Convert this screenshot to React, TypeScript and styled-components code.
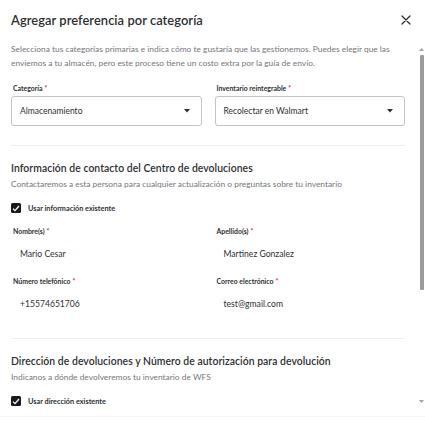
import React from "react";
import styled, { createGlobalStyle } from "styled-components";

const GlobalStyle = createGlobalStyle`
  html, body { margin: 0; padding: 0; background: #fff; }
  body { font-family: Lato, "Noto Sans", sans-serif; color: #2e2f32; }
  * { box-sizing: border-box; }
`;

const Modal = styled.div`
  width: 425px;
  height: 421px;
  background: #fff;
  display: flex;
  flex-direction: column;
  overflow: hidden;
`;

const Header = styled.header`
  height: 42px;
  flex: none;
  display: flex;
  align-items: center;
  justify-content: space-between;
  padding: 0 14px 2px 11px;
`;

const Title = styled.h1`
  margin: 0;
  font-size: 12.9px;
  font-weight: 600;
  letter-spacing: 0.05px;
  color: #2e2f32;
`;

const CloseButton = styled.button`
  border: 0;
  background: none;
  padding: 0;
  width: 11px;
  height: 11px;
  display: flex;
  align-items: center;
  justify-content: center;
  cursor: pointer;
`;

const Body = styled.div`
  position: relative;
  flex: 1;
  overflow: hidden;
`;

const Content = styled.div`
  padding: 0 20px 0 11px;
`;

const ScrollTrack = styled.div`
  position: absolute;
  top: 3px;
  right: 0;
  bottom: 10px;
  width: 7px;
  display: flex;
  flex-direction: column;
  align-items: center;
  background: #fff;
`;

const ScrollArrow = styled.div`
  height: 9px;
  flex: none;
  display: flex;
  align-items: center;
  justify-content: center;
`;

const ScrollGutter = styled.div`
  flex: 1;
  width: 100%;
  display: flex;
  justify-content: center;
`;

const ScrollThumb = styled.div`
  width: 4px;
  margin-top: 1px;
  background: #9b9b9b;
  border-radius: 1px;
`;

const Footer = styled.div`
  height: 5px;
  flex: none;
  border-top: 1px solid #f7f7f7;
`;

const Description = styled.p`
  margin: 0;
  font-size: 8.4px;
  line-height: 14px;
  color: #74767c;
`;

const Grid = styled.div<{ $top: number }>`
  display: grid;
  grid-template-columns: 1fr 1fr;
  column-gap: 13px;
  row-gap: 8px;
  margin-top: ${(p) => p.$top}px;
`;

const Field = styled.div`
  display: flex;
  flex-direction: column;
  gap: 4px;
`;

const Label = styled.label`
  font-size: 6.9px;
  line-height: 8px;
  font-weight: 700;
  color: #2e2f32;
  padding-left: 2px;
`;

const Req = styled.span`
  color: #de1c24;
  margin-left: 2px;
`;

const Select = styled.div`
  height: 30px;
  border: 1px solid #c4c4c4;
  border-radius: 3px;
  display: flex;
  align-items: center;
  justify-content: space-between;
  padding: 0 11px 0 8px;
  font-size: 8.5px;
  color: #2e2f32;
`;

const Value = styled.div`
  height: 30px;
  display: flex;
  align-items: center;
  padding-left: 9px;
  font-size: 8.6px;
  color: #2e2f32;
`;

const Divider = styled.hr`
  margin: 19px 0 0;
  border: 0;
  border-top: 1px solid #ececec;
`;

const SectionTitle = styled.h2`
  margin: 15px 0 0;
  font-size: 10.4px;
  line-height: 14px;
  font-weight: 600;
  letter-spacing: 0.05px;
  color: #2e2f32;
`;

const SectionSub = styled.p`
  margin: 4px 0 0;
  font-size: 8.4px;
  line-height: 11px;
  color: #74767c;
`;

const CheckRow = styled.label`
  display: flex;
  align-items: center;
  gap: 7px;
  margin-top: 13px;
  font-size: 7.3px;
  font-weight: 700;
  color: #2e2f32;
`;

const Box = styled.span`
  width: 10px;
  height: 10px;
  border-radius: 1.5px;
  background: #1a1a1a;
  display: flex;
  align-items: center;
  justify-content: center;
`;

const Caret = () => (
  <svg width="6" height="4" viewBox="0 0 6 4">
    <polygon points="0,0 6,0 3,3.5" fill="#2e2f32" />
  </svg>
);

const Check = ({ label }: { label: string }) => (
  <CheckRow>
    <Box>
      <svg width="8" height="7" viewBox="0 0 8 7">
        <polyline points="1,3.6 3,5.6 7,1" fill="none" stroke="#fff" strokeWidth="1.3" />
      </svg>
    </Box>
    {label}
  </CheckRow>
);

const LabeledSelect = ({ label, value }: { label: string; value: string }) => (
  <Field>
    <Label>
      {label}
      <Req>*</Req>
    </Label>
    <Select>
      {value}
      <Caret />
    </Select>
  </Field>
);

const LabeledValue = ({ label, value }: { label: string; value: string }) => (
  <Field>
    <Label>
      {label}
      <Req>*</Req>
    </Label>
    <Value>{value}</Value>
  </Field>
);

const Scrollbar = ({ thumb }: { thumb: number }) => (
  <ScrollTrack>
    <ScrollArrow>
      <svg width="5" height="3" viewBox="0 0 5 3">
        <polygon points="2.5,0 5,3 0,3" fill="#a3a3a3" />
      </svg>
    </ScrollArrow>
    <ScrollGutter>
      <ScrollThumb style={{ height: thumb }} />
    </ScrollGutter>
    <ScrollArrow>
      <svg width="5" height="3" viewBox="0 0 5 3">
        <polygon points="0,0 5,0 2.5,3" fill="#a3a3a3" />
      </svg>
    </ScrollArrow>
  </ScrollTrack>
);

export default function App() {
  return (
    <>
      <GlobalStyle />
      <Modal>
        <Header>
          <Title>Agregar preferencia por categoría</Title>
          <CloseButton aria-label="Cerrar">
            <svg width="10" height="10" viewBox="0 0 10 10">
              <path d="M1 1 L9 9 M9 1 L1 9" stroke="#2e2f32" strokeWidth="1.3" strokeLinecap="round" />
            </svg>
          </CloseButton>
        </Header>
        <Body>
          <Content>
            <Description>
              Selecciona tus categorías primarias e indica cómo te gustaría que las gestionemos. Puedes elegir que las
              enviemos a tu almacén, pero este proceso tiene un costo extra por la guía de envío.
            </Description>
            <Grid $top={14}>
              <LabeledSelect label="Categoría" value="Almacenamiento" />
              <LabeledSelect label="Inventario reintegrable" value="Recolectar en Walmart" />
            </Grid>
            <Divider />
            <SectionTitle>Información de contacto del Centro de devoluciones</SectionTitle>
            <SectionSub>Contactaremos a esta persona para cualquier actualización o preguntas sobre tu inventario</SectionSub>
            <Check label="Usar información existente" />
            <Grid $top={14}>
              <LabeledValue label="Nombre(s)" value="Mario Cesar" />
              <LabeledValue label="Apellido(s)" value="Martinez Gonzalez" />
              <LabeledValue label="Número telefónico" value="+15574651706" />
              <LabeledValue label="Correo electrónico" value="test@gmail.com" />
            </Grid>
            <Divider />
            <SectionTitle>Dirección de devoluciones y Número de autorización para devolución</SectionTitle>
            <SectionSub>Indicanos a dónde devolveremos tu inventario de WFS</SectionSub>
            <Check label="Usar dirección existente" />
          </Content>
          <Scrollbar thumb={235} />
        </Body>
        <Footer />
      </Modal>
    </>
  );
}
